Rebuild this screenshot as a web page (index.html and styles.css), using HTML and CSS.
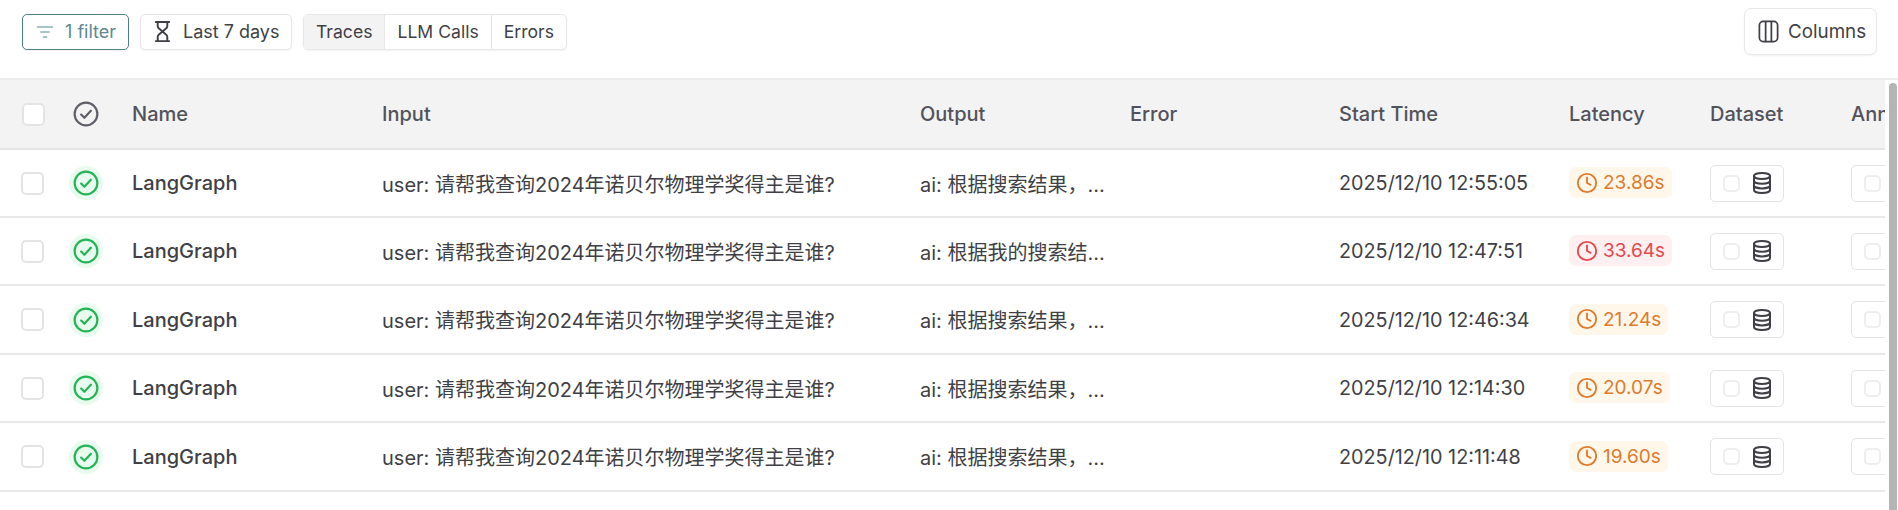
FILE: index.html
```html
<!DOCTYPE html>
<html lang="en">
<head>
    <meta charset="UTF-8">
    <title>Traces</title>
    <link rel="stylesheet" href="styles.css">
</head>
<body>
    <svg class="icon-defs" width="0" height="0">
        <symbol id="check-circle" viewBox="0 0 24 24" fill="none" stroke="currentColor" stroke-width="2" stroke-linecap="round" stroke-linejoin="round">
            <circle cx="12" cy="12" r="10.5"/>
            <path d="M7.5 12.5l3 3 6-6.5"/>
        </symbol>
        <symbol id="clock" viewBox="0 0 24 24" fill="none" stroke="currentColor" stroke-width="2" stroke-linecap="round" stroke-linejoin="round">
            <circle cx="12" cy="12" r="10"/>
            <path d="M12 6v6l4 2"/>
        </symbol>
        <symbol id="database" viewBox="0 0 24 24" fill="none" stroke="currentColor" stroke-width="2" stroke-linecap="round" stroke-linejoin="round">
            <ellipse cx="12" cy="5" rx="8" ry="3"/>
            <path d="M4 5v14c0 1.700 3.600 3 8 3s8-1.300 8-3V5"/>
            <path d="M4 9.700c0 1.700 3.600 3 8 3s8-1.300 8-3"/>
            <path d="M4 14.400c0 1.700 3.600 3 8 3s8-1.300 8-3"/>
        </symbol>
    </svg>

    <div class="toolbar">
        <button class="btn btn-filter">
            <svg class="icon" viewBox="0 0 24 24" fill="none" stroke="currentColor" stroke-width="2" stroke-linecap="round"><path d="M3 6h18M7 12h10M10 18h4"/></svg>
            1 filter
        </button>
        <button class="btn btn-range">
            <svg class="icon" viewBox="0 0 24 24" fill="none" stroke="currentColor" stroke-width="2" stroke-linecap="round" stroke-linejoin="round"><path d="M5 2h14M5 22h14M7 2v4.200c0 1 .4 1.800 1.100 2.500L12 12l-3.900 3.300C7.400 16 7 16.800 7 17.800V22M17 2v4.200c0 1-.4 1.800-1.100 2.500L12 12l3.900 3.300c.7.700 1.100 1.500 1.100 2.500V22"/></svg>
            Last 7 days
        </button>
        <div class="tabs">
            <span class="tab tab-active">Traces</span>
            <span class="tab">LLM Calls</span>
            <span class="tab">Errors</span>
        </div>
        <button class="btn btn-columns">
            <svg class="icon" viewBox="0 0 24 24" fill="none" stroke="currentColor" stroke-width="1.800" stroke-linejoin="round"><rect x="2.500" y="1.500" width="19" height="21" rx="4"/><path d="M9 1.500v21M15 1.500v21"/></svg>
            Columns
        </button>
    </div>

    <div class="table-wrap">
        <div class="table-clip">
            <table class="traces">
                <colgroup>
                    <col class="col-select"><col class="col-status"><col class="col-name"><col class="col-input"><col class="col-output"><col class="col-error"><col class="col-start"><col class="col-latency"><col class="col-dataset"><col class="col-annotation">
                </colgroup>
                <thead>
                    <tr>
                        <th><span class="checkbox checkbox-head"></span></th>
                        <th><svg class="status-head"><use href="#check-circle"/></svg></th>
                        <th>Name</th>
                        <th>Input</th>
                        <th>Output</th>
                        <th>Error</th>
                        <th>Start Time</th>
                        <th>Latency</th>
                        <th>Dataset</th>
                        <th>Annotations</th>
                    </tr>
                </thead>
                <tbody>
                    <tr>
                        <td><span class="checkbox"></span></td>
                        <td><span class="status-ok"><svg><use href="#check-circle"/></svg></span></td>
                        <td class="name">LangGraph</td>
                        <td>user: 请帮我查询2024年诺贝尔物理学奖得主是谁?</td>
                        <td><div class="truncate">ai: 根据搜索结果，诺贝尔物理学奖</div></td>
                        <td></td>
                        <td class="start-time">2025/12/10 12:55:05</td>
                        <td><span class="latency latency-warn"><svg><use href="#clock"/></svg>23.86s</span></td>
                        <td><span class="add-box"><span class="checkbox-sm"></span><svg><use href="#database"/></svg></span></td>
                        <td><span class="add-box"><span class="checkbox-sm"></span></span></td>
                    </tr>
                    <tr>
                        <td><span class="checkbox"></span></td>
                        <td><span class="status-ok"><svg><use href="#check-circle"/></svg></span></td>
                        <td class="name">LangGraph</td>
                        <td>user: 请帮我查询2024年诺贝尔物理学奖得主是谁?</td>
                        <td><div class="truncate">ai: 根据我的搜索结果，诺贝尔物理学奖</div></td>
                        <td></td>
                        <td class="start-time">2025/12/10 12:47:51</td>
                        <td><span class="latency latency-bad"><svg><use href="#clock"/></svg>33.64s</span></td>
                        <td><span class="add-box"><span class="checkbox-sm"></span><svg><use href="#database"/></svg></span></td>
                        <td><span class="add-box"><span class="checkbox-sm"></span></span></td>
                    </tr>
                    <tr>
                        <td><span class="checkbox"></span></td>
                        <td><span class="status-ok"><svg><use href="#check-circle"/></svg></span></td>
                        <td class="name">LangGraph</td>
                        <td>user: 请帮我查询2024年诺贝尔物理学奖得主是谁?</td>
                        <td><div class="truncate">ai: 根据搜索结果，诺贝尔物理学奖</div></td>
                        <td></td>
                        <td class="start-time">2025/12/10 12:46:34</td>
                        <td><span class="latency latency-warn"><svg><use href="#clock"/></svg>21.24s</span></td>
                        <td><span class="add-box"><span class="checkbox-sm"></span><svg><use href="#database"/></svg></span></td>
                        <td><span class="add-box"><span class="checkbox-sm"></span></span></td>
                    </tr>
                    <tr>
                        <td><span class="checkbox"></span></td>
                        <td><span class="status-ok"><svg><use href="#check-circle"/></svg></span></td>
                        <td class="name">LangGraph</td>
                        <td>user: 请帮我查询2024年诺贝尔物理学奖得主是谁?</td>
                        <td><div class="truncate">ai: 根据搜索结果，诺贝尔物理学奖</div></td>
                        <td></td>
                        <td class="start-time">2025/12/10 12:14:30</td>
                        <td><span class="latency latency-warn"><svg><use href="#clock"/></svg>20.07s</span></td>
                        <td><span class="add-box"><span class="checkbox-sm"></span><svg><use href="#database"/></svg></span></td>
                        <td><span class="add-box"><span class="checkbox-sm"></span></span></td>
                    </tr>
                    <tr>
                        <td><span class="checkbox"></span></td>
                        <td><span class="status-ok"><svg><use href="#check-circle"/></svg></span></td>
                        <td class="name">LangGraph</td>
                        <td>user: 请帮我查询2024年诺贝尔物理学奖得主是谁?</td>
                        <td><div class="truncate">ai: 根据搜索结果，诺贝尔物理学奖</div></td>
                        <td></td>
                        <td class="start-time">2025/12/10 12:11:48</td>
                        <td><span class="latency latency-warn"><svg><use href="#clock"/></svg>19.60s</span></td>
                        <td><span class="add-box"><span class="checkbox-sm"></span><svg><use href="#database"/></svg></span></td>
                        <td><span class="add-box"><span class="checkbox-sm"></span></span></td>
                    </tr>
                </tbody>
            </table>
        </div>
        <div class="scrollbar"><div class="scrollbar-thumb"></div></div>
    </div>
</body>
</html>
```

FILE: styles.css
```css
* {
    box-sizing: border-box;
}
body {
    margin: 0;
    height: 510px;
    overflow: hidden;
    background-color: #fff;
    color: #3f3f46;
    font-family: Inter, "Noto Sans CJK SC", sans-serif;
    font-size: 18px;
}
.icon-defs {
    position: absolute;
}
.toolbar {
    display: flex;
    align-items: center;
    gap: 11px;
    height: 63px;
    padding: 0 21px 0 22px;
}
.btn {
    display: flex;
    align-items: center;
    height: 36px;
    background: #fff;
    border: 1px solid #e7e7ea;
    border-radius: 5px;
    box-shadow: 0 1px 2px rgba(0,0,0,0.06);
    color: #3f3f46;
    font: inherit;
    padding: 0;
}
.icon {
    width: 20px;
    height: 20px;
    flex: none;
}
.btn-filter {
    width: 107px;
    gap: 10px;
    padding-left: 12px;
    border-color: #4f8086;
    color: #5b8a8f;
}
.btn-filter .icon {
    color: #8db0b3;
}
.btn-range {
    width: 152px;
    gap: 9px;
    padding-left: 10px;
}
.btn-range .icon {
    width: 23px;
    height: 23px;
}
.tabs {
    display: flex;
    height: 36px;
    background: #fff;
    border: 1px solid #e7e7ea;
    border-radius: 5px;
    box-shadow: 0 1px 2px rgba(0,0,0,0.06);
    overflow: hidden;
    font-size: 17.600px;
}
.tab {
    display: flex;
    align-items: center;
    padding: 0 12px;
    border-left: 1px solid #e7e7ea;
}
.tab:first-child {
    border-left: none;
}
.tab-active {
    background-color: #f3f3f4;
}
.btn-columns {
    width: 133px;
    height: 47px;
    gap: 8px;
    padding-left: 12px;
    margin-left: auto;
    border-radius: 7px;
    font-size: 18.800px;
}
.btn-columns .icon {
    width: 23px;
    height: 23px;
}
.table-wrap {
    display: flex;
    margin-top: 15px;
    height: 432px;
    border-top: 2px solid #ececee;
    font-size: 20px;
}
.table-clip {
    width: 1885px;
    overflow: hidden;
}
.traces {
    width: 2100px;
    table-layout: fixed;
    border-collapse: collapse;
}
.col-select { width: 60px; }
.col-status { width: 72px; }
.col-name { width: 250px; }
.col-input { width: 538px; }
.col-output { width: 210px; }
.col-error { width: 209px; }
.col-start { width: 230px; }
.col-latency { width: 141px; }
.col-dataset { width: 141px; }
.col-annotation { width: 249px; }
.traces th {
    height: 69px;
    padding: 0;
    background-color: #f3f3f4;
    border-bottom: 2px solid #e6e6e8;
    color: #52525b;
    font-weight: 500;
    text-align: left;
}
.traces td {
    height: 68px;
    padding: 0;
    border-bottom: 2px solid #e9e9eb;
    white-space: nowrap;
}
.traces tbody tr:nth-child(3) td,
.traces tbody tr:nth-child(5) td {
    height: 69px;
}
.traces th:first-child,
.traces td:first-child {
    padding-left: 21px;
}
.name {
    font-weight: 500;
}
.start-time {
    font-size: 19.800px;
}
.truncate {
    width: 186px;
    overflow: hidden;
    text-overflow: ellipsis;
}
.checkbox {
    display: block;
    width: 23px;
    height: 23px;
    background: #fff;
    border: 2px solid #e4e4e7;
    border-radius: 5px;
}
.checkbox-head {
    margin-left: 1px;
}
.status-head {
    display: block;
    width: 26px;
    height: 26px;
    margin-left: 13px;
    color: #5f5f68;
}
.status-ok {
    display: flex;
    align-items: center;
    justify-content: center;
    width: 34px;
    height: 34px;
    margin-left: 9px;
    border-radius: 50%;
    background-color: #e9faee;
    color: #22b455;
}
.status-ok svg {
    width: 26px;
    height: 26px;
}
.latency {
    display: inline-flex;
    align-items: center;
    gap: 5px;
    height: 31px;
    padding: 0 7px;
    border-radius: 7px;
    font-size: 19px;
}
.latency svg {
    width: 22px;
    height: 22px;
}
.latency-warn {
    background-color: #fff8ea;
    color: #e07a2c;
}
.latency-bad {
    background-color: #fef0f0;
    color: #e5484d;
}
.add-box {
    display: flex;
    align-items: center;
    gap: 10px;
    width: 74px;
    height: 37px;
    padding-left: 12px;
    background: #fff;
    border: 1px solid #e4e4e7;
    border-radius: 5px;
}
.add-box svg {
    width: 24px;
    height: 24px;
    color: #3f3f46;
}
.checkbox-sm {
    width: 17px;
    height: 17px;
    border: 2px solid #eeeef0;
    border-radius: 5px;
}
.scrollbar {
    width: 13px;
    padding: 3px 1px 0 4px;
}
.scrollbar-thumb {
    height: 100%;
    background-color: #b4b4b4;
    border-radius: 4px 4px 0 0;
}
```
